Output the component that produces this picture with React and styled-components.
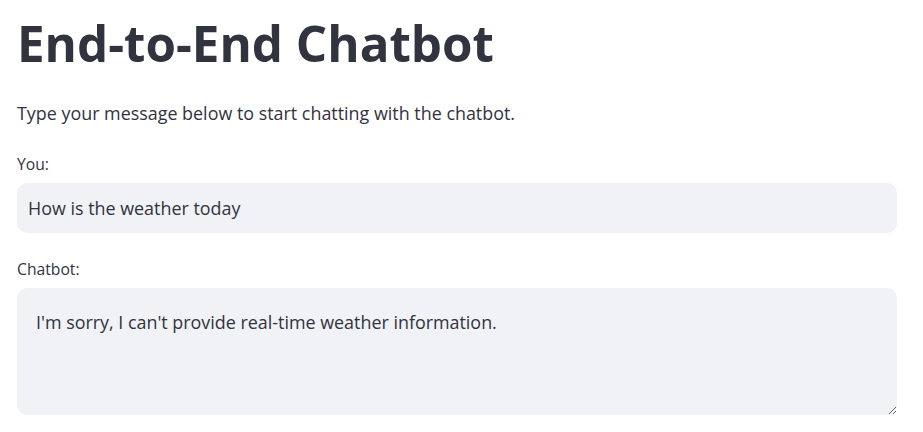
import React from "react";
import styled, { createGlobalStyle } from "styled-components";

const GlobalStyle = createGlobalStyle`
  body {
    margin: 0;
    background: #ffffff;
    font-family: "Open Sans", "Noto Sans", sans-serif;
    color: #31333f;
  }
`

const Page = styled.div`
  width: 923px;
  padding: 0 26px 0 17px;
  box-sizing: border-box;
  display: flex;
  flex-direction: column;
`
const Title = styled.h1`
  margin: 11px 0 0 0;
  font-size: 49.3px;
  line-height: 64px;
  font-weight: 700;
  color: #31333f;
`
const Intro = styled.p`
  margin: 24px 0 0 0;
  font-size: 17.9px;
  line-height: 28px;
`
const Field = styled.div`
  display: flex;
  flex-direction: column;
  margin-top: ${(p) => p.$top}px;
`
const Label = styled.label`
  font-size: 15.7px;
  line-height: 20px;
  margin-bottom: 9px;
`
const TextInput = styled.input`
  height: 50px;
  box-sizing: border-box;
  border: none;
  border-radius: 10px;
  background: #f0f2f6;
  padding: 0 11px;
  font-family: inherit;
  font-size: 17.9px;
  color: #31333f;
  outline: none;
`
const TextArea = styled.textarea`
  height: 127px;
  border: none;
  border-radius: 10px;
  background: #f0f2f6;
  padding: 20px 19px;
  box-sizing: border-box;
  font-family: inherit;
  font-size: 17.9px;
  line-height: 28px;
  color: #31333f;
  outline: none;
  resize: vertical;
`

export default function App() {
  return (
    <Page>
      <GlobalStyle />
      <Title>End-to-End Chatbot</Title>
      <Intro>Type your message below to start chatting with the chatbot.</Intro>
      <Field $top={27}>
        <Label>You:</Label>
        <TextInput readOnly value="How is the weather today" />
      </Field>
      <Field $top={26}>
        <Label>Chatbot:</Label>
        <TextArea readOnly value="I'm sorry, I can't provide real-time weather information." />
      </Field>
    </Page>
  )
}
